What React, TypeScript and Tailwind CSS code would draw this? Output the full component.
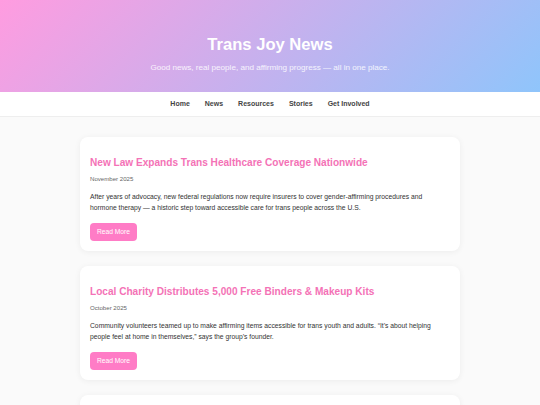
import React from "react";

const articles = [
  {
    title: "New Law Expands Trans Healthcare Coverage Nationwide",
    date: "November 2025",
    body: "After years of advocacy, new federal regulations now require insurers to cover gender-affirming procedures and hormone therapy — a historic step toward accessible care for trans people across the U.S.",
  },
  {
    title: "Local Charity Distributes 5,000 Free Binders & Makeup Kits",
    date: "October 2025",
    body: "Community volunteers teamed up to make affirming items accessible for trans youth and adults. “It’s about helping people feel at home in themselves,” says the group’s founder.",
  },
  {
    title: "Trans Athletes Celebrated at Regional Games",
    date: "September 2025",
    body: "Fans cheered as trans athletes took the podium in record numbers.",
  },
];

export default function App() {
  return (
    <div className="min-h-screen bg-[#fafafa] font-['Liberation_Sans',Arial,sans-serif]">
      <header className="h-[92px] bg-[linear-gradient(135deg,#ff9ce0,#8fc5fb)] flex flex-col items-center pt-[36px] text-white">
        <h1 className="text-[16.6px] font-bold leading-[17px]">Trans Joy News</h1>
        <p className="text-[8.1px] leading-[9px] mt-[10px] text-white/85">
          Good news, real people, and affirming progress — all in one place.
        </p>
      </header>
      <nav className="h-[25px] bg-white border-b border-[#eeeeee] flex items-center justify-center gap-[15px] text-[7px] font-bold text-[#444]">
        <span>Home</span>
        <span>News</span>
        <span>Resources</span>
        <span>Stories</span>
        <span>Get Involved</span>
      </nav>
      <main className="flex flex-col items-center gap-[15px] pt-[20px] pb-[20px]">
        {articles.map((a) => (
          <article
            key={a.title}
            className="w-[380px] bg-white rounded-[8px] shadow-[0_1px_6px_rgba(0,0,0,0.06)] px-[10px] pt-[20px] pb-[10px]"
          >
            <h2 className="text-[10.1px] font-bold text-[#f472b6] leading-[12px]">{a.title}</h2>
            <div className="text-[6.1px] text-[#666] mt-[6px] leading-[8px]">{a.date}</div>
            <p className="text-[6.75px] text-[#333] leading-[11px] mt-[7.5px]">{a.body}</p>
            <button className="mt-[10.5px] h-[18px] w-[47px] rounded-[4px] bg-[#ff7cc6] text-white text-[6.7px] block">
              Read More
            </button>
          </article>
        ))}
      </main>
    </div>
  );
}
